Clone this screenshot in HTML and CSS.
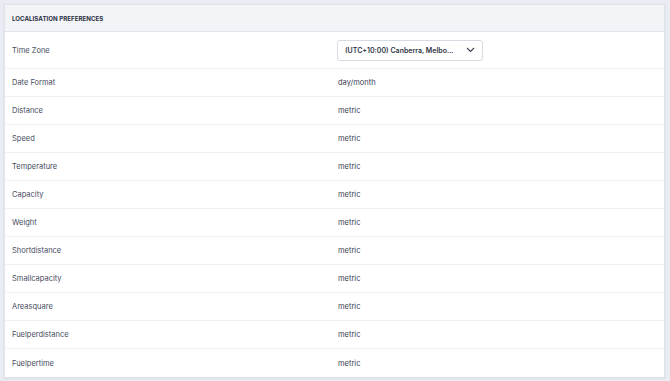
FILE: index.html
```html
<!DOCTYPE html>
<html lang="en">
<head>
  <meta charset="UTF-8">
  <title>Localisation Preferences</title>
  <link rel="stylesheet" href="styles.css">
</head>
<body>
  <div class="card">
    <div class="card-head">LOCALISATION PREFERENCES</div>
    <div class="row row-tz">
      <div class="label">Time Zone</div>
      <div class="value">
        <div class="select">
          <span>(UTC+10:00) Canberra, Melbo...</span>
          <svg width="9" height="6" viewBox="0 0 9 6"><path d="M1 1l3.5 3.5L8 1" fill="none" stroke="#3b4252" stroke-width="1.1"/></svg>
        </div>
      </div>
    </div>
    <div class="row"><div class="label">Date Format</div><div class="value">day/month</div></div>
    <div class="row"><div class="label">Distance</div><div class="value">metric</div></div>
    <div class="row"><div class="label">Speed</div><div class="value">metric</div></div>
    <div class="row"><div class="label">Temperature</div><div class="value">metric</div></div>
    <div class="row"><div class="label">Capacity</div><div class="value">metric</div></div>
    <div class="row"><div class="label">Weight</div><div class="value">metric</div></div>
    <div class="row"><div class="label">Shortdistance</div><div class="value">metric</div></div>
    <div class="row"><div class="label">Smallcapacity</div><div class="value">metric</div></div>
    <div class="row"><div class="label">Areasquare</div><div class="value">metric</div></div>
    <div class="row"><div class="label">Fuelperdistance</div><div class="value">metric</div></div>
    <div class="row"><div class="label">Fuelpertime</div><div class="value">metric</div></div>
  </div>
</body>
</html>
```

FILE: styles.css
```css
*{
  margin:0;
  padding:0;
  box-sizing: border-box;
}
body{
  background-color: #e9ecf3;
  font-family: "Inter", "Noto Sans", sans-serif;
  color: #3f4556;
  padding: 4px 5px 5px 4px;
}
.card{
  background: #fff;
  border: 1px solid #dfe3ea;
  box-shadow: 0 1px 2px rgba(30,40,70,0.08);
}
.card-head{
  height: 27px;
  background: #f2f4f8;
  border-bottom: 1px solid #dfe3ea;
  font-size: 6.2px;
  font-weight: 700;
  color: #2c3140;
  padding: 0 0 0 7px;
  line-height: 27px;
}
.row{
  display: flex;
  align-items: center;
  height: 28px;
  border-bottom: 1px solid #eef0f4;
  font-size: 7.5px;
}
.row:last-child{
  border-bottom: none;
}
.row-tz{
  height: 37px;
}
.label{
  width: 333px;
  padding-left: 7px;
  color: #454b5c;
}
.value{
  color: #3a4052;
}
.select{
  display: flex;
  align-items: center;
  justify-content: space-between;
  width: 146px;
  height: 21px;
  padding: 0 7px 0 7px;
  border: 1px solid #d6dae2;
  border-radius: 3px;
  font-size: 7px;
  font-weight: 600;
  color: #2f3443;
  margin-left: -1px;
}
```
